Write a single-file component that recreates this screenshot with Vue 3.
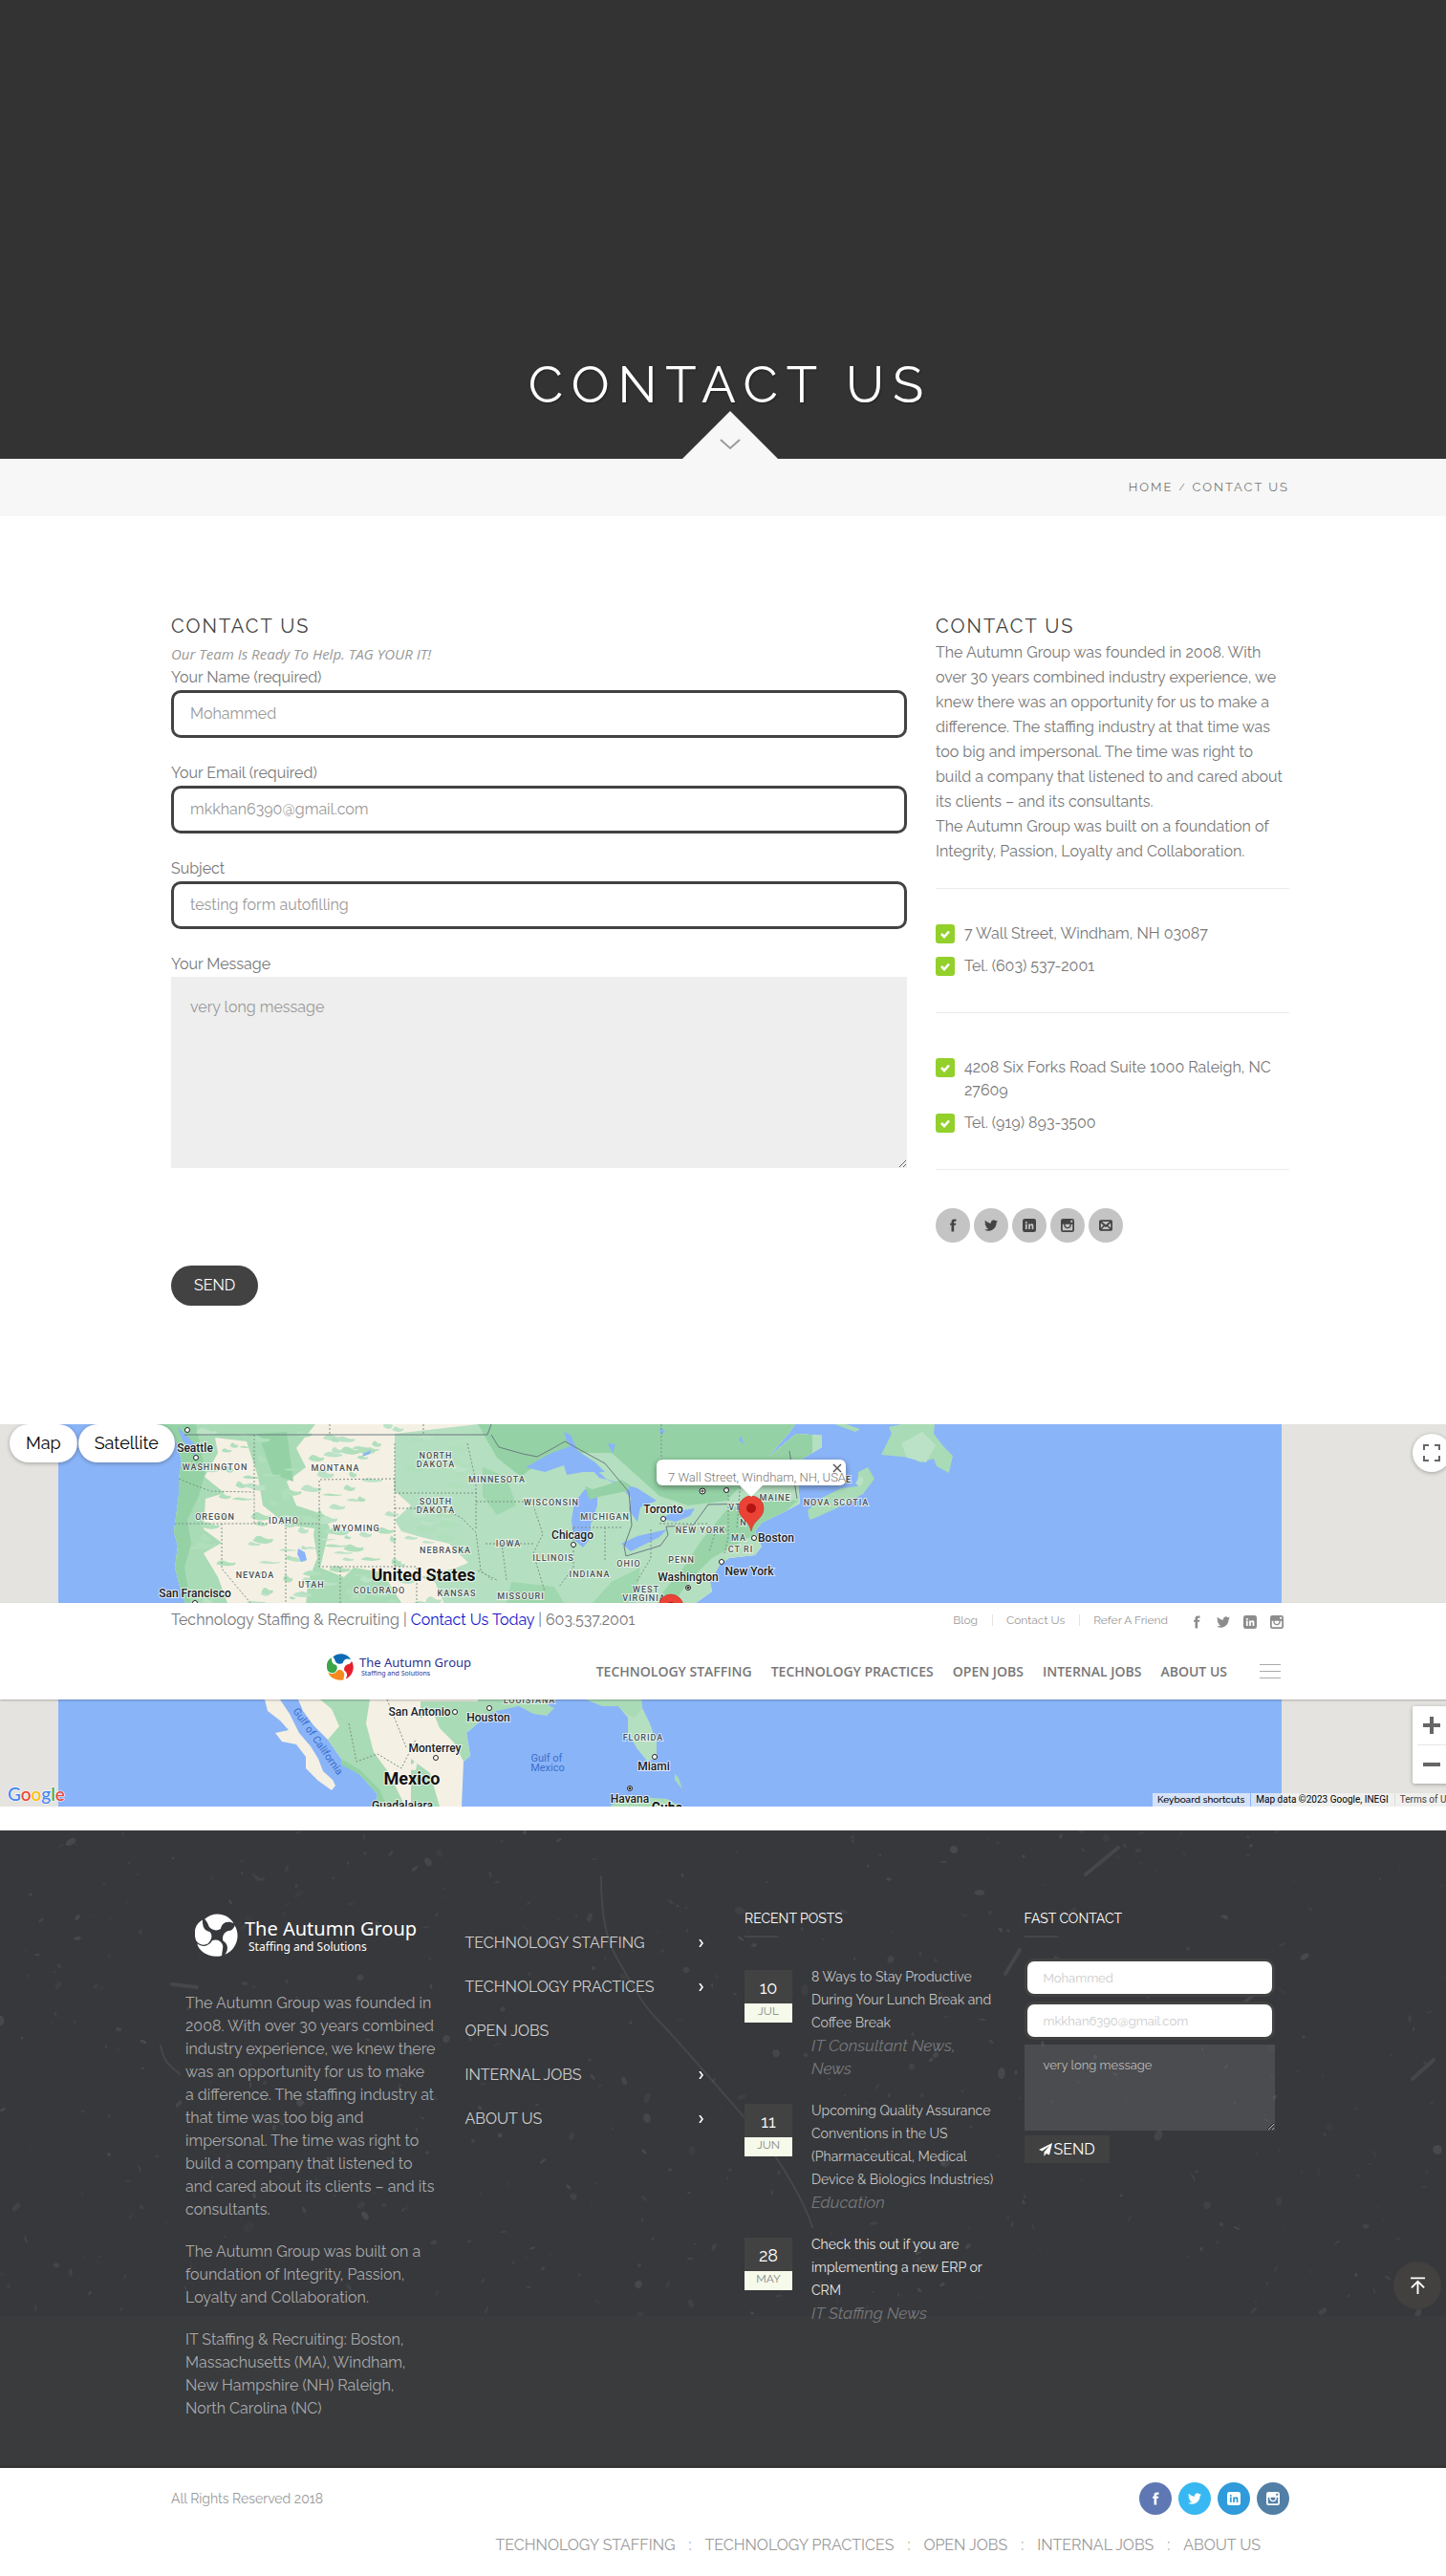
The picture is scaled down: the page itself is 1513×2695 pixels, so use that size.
<script setup>
import { ref } from 'vue'

const name = ref('Mohammed')
const email = ref('mkkhan6390@gmail.com')
const subject = ref('testing form autofilling')
const message = ref('very long message')

const links = ['TECHNOLOGY STAFFING', 'TECHNOLOGY PRACTICES', 'OPEN JOBS', 'INTERNAL JOBS', 'ABOUT US']

const icons = {
  facebook: 'M14 8V6c0-1 .4-1.500 1.600-1.500H18V1h-3.500C11 1 9.500 2.800 9.500 5.800V8H7v3.700h2.500V23H14V11.700h3.200L17.700 8z',
  twitter: 'M23.950 4.570a10 10 0 0 1-2.820.77 4.960 4.960 0 0 0 2.160-2.720c-.95.56-2 .96-3.130 1.180a4.920 4.920 0 0 0-8.380 4.480C7.690 8.100 4.070 6.130 1.640 3.160a4.820 4.820 0 0 0-.67 2.480c0 1.710.87 3.210 2.190 4.100a4.900 4.900 0 0 1-2.230-.62v.06a4.920 4.920 0 0 0 3.950 4.830 5 5 0 0 1-2.210.08 4.940 4.940 0 0 0 4.600 3.420A9.870 9.870 0 0 1 0 19.540a14 14 0 0 0 7.550 2.210c9.050 0 14-7.500 14-13.980 0-.21 0-.42-.02-.63a9.940 9.940 0 0 0 2.420-2.570z',
  linkedin: 'M4 0h16a4 4 0 0 1 4 4v16a4 4 0 0 1-4 4H4a4 4 0 0 1-4-4V4a4 4 0 0 1 4-4zM5 9.500v9.500h3V9.500zM5 5v3h3V5zM10.500 9.500v9.500h3v-5.500c0-2.200 3-2.200 3 0V19h3v-6.500c0-3.800-4.300-4.300-6-2v-1z',
  instagram: 'M4 0h16a4 4 0 0 1 4 4v16a4 4 0 0 1-4 4H4a4 4 0 0 1-4-4V4a4 4 0 0 1 4-4zM3 10v9.500A1.500 1.500 0 0 0 4.500 21h15a1.500 1.500 0 0 0 1.500-1.500V10h-2.600a6.500 6.500 0 1 1-12.800 0zM17.500 3v3.500H21V3zM8 10a4.200 4.200 0 1 0 8 0z',
  mail: 'M3 2h18a3 3 0 0 1 3 3v14a3 3 0 0 1-3 3H3a3 3 0 0 1-3-3V5a3 3 0 0 1 3-3zM3 7.500v9L8 12zM5 5l7 6.200L19 5zM21 7.500l-5 4.500 5 4.500zM9.700 13.500L5 19h14l-4.700-5.500-2.300 2z'
}
const sideSocial = ['facebook', 'twitter', 'linkedin', 'instagram', 'mail']
const social = ['facebook', 'twitter', 'linkedin', 'instagram']

const posts = [
  { day: '10', month: 'JUL', title: '8 Ways to Stay Productive During Your Lunch Break and Coffee Break', tag: 'IT Consultant News,\nNews' },
  { day: '11', month: 'JUN', title: 'Upcoming Quality Assurance Conventions in the US (Pharmaceutical, Medical Device & Biologics Industries)', tag: 'Education' },
  { day: '28', month: 'MAY', title: 'Check this out if you are implementing a new ERP or CRM', tag: 'IT Staffing News', bright: true }
]

const offices = [
  ['7 Wall Street, Windham, NH 03087', 'Tel. (603) 537-2001'],
  ['4208 Six Forks Road Suite 1000 Raleigh, NC 27609', 'Tel. (919) 893-3500']
]

// [text, centre x, baseline]
const states = [
  ['WASHINGTON', 225, 48], ['MONTANA', 351, 49], ['NORTH', 456, 36], ['DAKOTA', 456, 45], ['SOUTH', 456, 84],
  ['DAKOTA', 456, 93], ['OREGON', 225, 100], ['IDAHO', 297, 104], ['WYOMING', 373, 112], ['NEBRASKA', 466, 135],
  ['NEVADA', 267, 161], ['UTAH', 326, 171], ['COLORADO', 397, 177], ['KANSAS', 478, 180], ['MINNESOTA', 520, 61],
  ['WISCONSIN', 577, 85], ['MICHIGAN', 633, 100], ['IOWA', 532, 128], ['ILLINOIS', 579, 143], ['INDIANA', 617, 160],
  ['OHIO', 658, 149], ['PENN', 713, 145], ['NEW YORK', 733, 114], ['WEST', 676, 176], ['VIRGINIA', 674, 185],
  ['MISSOURI', 545, 183], ['MAINE', 811, 80], ['NOVA SCOTIA', 875, 85], ['VT', 769, 90], ['N', 778, 106],
  ['MA', 773, 122], ['CT RI', 775, 134], ['LOUISIANA', 554, 292], ['FLORIDA', 673, 331], ['E', 888, 61]
]
// [text, centre x, baseline, dot x, dot y, capital]
const cities = [
  ['Seattle', 204, 29, 205, 35], ['San Francisco', 204, 181, 204, 187], ['Chicago', 599, 120, 600, 126],
  ['Toronto', 694, 93, 694, 99], ['Boston', 812, 123, 789, 119], ['New York', 784, 158, 755, 144],
  ['Washington', 720, 164, 720, 171, true], ['San Antonio', 439, 305, 476, 301], ['Houston', 511, 311, 512, 297],
  ['Monterrey', 455, 343, 456, 349], ['Miami', 684, 362, 685, 348], ['Havana', 659, 396, 659, 381, true]
]

let seed = 41
const rand = () => {
  seed = (seed * 16807) % 2147483647
  return seed / 2147483647
}
const specks = Array.from({ length: 480 }, () => {
  const x = Math.round(rand() * 1528)
  const y = Math.round(rand() * 506)
  const big = rand() > 0.88
  return {
    x, y,
    rx: big ? 2 + rand() * 3 : 0.6 + rand() * 1.4,
    ry: big ? 2 + rand() * 4 : 1 + rand() * 3,
    a: Math.round(rand() * 180),
    o: 0.03 + rand() * 0.11
  }
})
const patches = Array.from({ length: 150 }, () => {
  const x = 200 + rand() * 300
  const y = rand() * 190
  const w = 3 + rand() * 8
  const h = 1 + rand() * 3
  return {
    d: `M${x - w} ${y}q${w * 0.4} ${-h * 2} ${w} ${-h}t${w} ${h * 0.4}q${w * 0.3} ${h} ${-w * 0.5} ${h * 1.3}t${-w * 1.5} ${-h * 0.7}z`,
    c: rand() > 0.5 ? '#bbe2c6' : '#b0dfbc'
  }
})
</script>

<template>
  <div class="page">
    <section class="hero">
      <h1>CONTACT US</h1>
      <a class="notch" href="#content" aria-label="Scroll down">
        <svg width="100" height="50" viewBox="0 0 100 50"><path d="M50 0L100 50H0z" fill="#f7f7f7" /><path d="M40 30l10 9 10-9" fill="none" stroke="#999" stroke-width="2" /></svg>
      </a>
    </section>
    <nav class="crumbs"><div class="wrap"><a href="#">HOME</a><span>/</span><a href="#">CONTACT US</a></div></nav>

    <main id="content" class="wrap main">
      <form class="contact" @submit.prevent>
        <h2>CONTACT US</h2>
        <p class="tagline">Our Team Is Ready To Help. TAG YOUR IT!</p>
        <label for="name">Your Name (required)</label>
        <input id="name" v-model="name" type="text">
        <label for="email">Your Email (required)</label>
        <input id="email" v-model="email" type="email">
        <label for="subject">Subject</label>
        <input id="subject" v-model="subject" type="text">
        <label for="message">Your Message</label>
        <textarea id="message" v-model="message"></textarea>
        <button type="submit">SEND</button>
      </form>
      <aside class="about">
        <h2>CONTACT US</h2>
        <p>The Autumn Group was founded in 2008. With<br>over 30 years combined industry experience, we<br>knew there was an opportunity for us to make a<br>difference. The staffing industry at that time was<br>too big and impersonal. The time was right to<br>build a company that listened to and cared about<br>its clients – and its consultants.</p>
        <p>The Autumn Group was built on a foundation of<br>Integrity, Passion, Loyalty and Collaboration.</p>
        <ul v-for="(office, i) in offices" :key="i" class="office">
          <li v-for="line in office" :key="line">
            <svg class="tick" viewBox="0 0 20 20"><rect width="20" height="20" rx="3" fill="#93d02b" /><path d="M6 10l3 3 5-5.500" fill="none" stroke="#fff" stroke-width="2.600" /></svg>
            <span>{{ line }}</span>
          </li>
        </ul>
        <div class="round-links">
          <a v-for="s in sideSocial" :key="s" href="#" :aria-label="s"><svg viewBox="0 0 24 24"><path :d="icons[s]" fill-rule="evenodd" /></svg></a>
        </div>
      </aside>
    </main>

    <section class="map">
      <svg class="map-art" viewBox="0 0 1528 400" preserveAspectRatio="xMinYMin slice">
        <defs>
          <clipPath id="land"><path d="M167 0L180 8 187 25 190 40 187 57 187 75 182 113 186 127 183 150 190 177 194 187 260 240 277 288H671L728 187 745 175 743 165 753 147 763 140 790 137 797 128 790 112 797 103 820 92 837 83 835 60 846 45 838 37 867 20 863 12 833 10 803 35 825 10 832 0z" /></clipPath>
        </defs>
        <rect width="1528" height="400" fill="#e5e3df" />
        <rect x="61" width="1280" height="400" fill="#8ab4f8" />
        <g clip-path="url(#land)">
          <rect x="160" width="700" height="290" fill="#f5f0e4" />
          <path d="M413 10L500 0H860V290H530L500 240 470 200 455 165 440 160 478 150 490 145 470 125 440 118 420 112 413 100 430 85 413 70z" fill="#b5dfc1" />
          <path d="M160 0H330L310 25 320 45 300 60 310 85 340 95 335 110 300 105 275 85 270 55 258 18 225 14 228 30 214 55 235 72 215 78 213 110 232 124 213 135 228 160 238 187H160z" fill="#a9dbb6" />
          <path d="M160 0H205L215 50 208 75 196 100 200 125 193 150 200 190 160 190zM270 10L300 8 307 60 285 52z" fill="#94d2a5" />
          <path d="M334 88L345 108 335 150 360 160 350 187 320 190 322 165 332 140 328 115zM370 150L400 155 420 187H350L352 168z" fill="#a9dbb6" />
          <path v-for="(p, i) in patches" :key="i" :d="p.d" :fill="p.c" />
          <path d="M500 0H850V60L800 40 760 80 720 85 690 75 640 30 577 30 545 55 520 35z" fill="#94d2a5" />
          <path d="M690 180L715 150 735 120 760 90 800 75 835 80 800 110 790 115 745 140 720 165 705 187z" fill="#99d4a9" />
          <path d="M505 45L530 55 540 85 520 95 505 75zM535 165L580 170 590 187 530 187zM640 165L670 150 665 187H620z" fill="#9fd7ae" />
        </g>
        <path d="M550 45l27-15 20-7 26 17 10 10-23 0-17 3-3-10-20 7zM601 82l11-14 13 2 0 15-7 20-1 15-7 9-10-9-2-20zM633 57l34 10 20 13-17 7-3 15-9-12 2-13-13-14zM650 125l17-8 31-7-8 8-30 15zM693 99l10-7 24-4-5 8-15 6z" fill="#8ab4f8" />
        <path d="M590 8l7 3 9 20 24 22 5 5-8-2-20-22-14-16zM636 20l8 1-3 10zM690 3l6 4-4 5zM775 12l4 9-6-4zM186 3l8 8 8 8 2 14-6-6-8-12zM312 130l7 4 2 8-6 2-4-8zM380 31l8-4-1 4-8 3z" fill="#8ab4f8" />
        <path d="M612 65l8 3 14-4 16-6 10 6-4 6-30 6-9 3z" fill="#94d2a5" />
        <path d="M922 32l11-22-3-7L943 0h35l-1 10 10 13 10 10-4 18-13-7-3-8-14 4-10-5zM847 100l-2-10 15-13 20-10 17-2 1-15 10-5 7 12-12 16-26 14-24 11zM873 0l12 0 15 5-5 3z" fill="#a9dbb6" />
        <path d="M943 20l22-12 14 14-10 18-20-5zM895 62l5-8 4 4-3 7z" fill="#bbe2c6" />
        <path d="M312 288H500L502 311 488 323 492 347 485 353 483 400H393L395 387 377 367 357 350 343 330 328 315 317 300z" fill="#f5f0e4" />
        <path d="M335 288h52l-4 25 8 30 16 22 17 35h-31l2-13-18-20-20-17-14-20 12-14-8-18zM440 290h60l2 21-14 12 4 24-7 6-10-20-15-15-8-20-12 10zM430 350l20 15 10 35h-30z" fill="#a9dbb6" />
        <path d="M357 350l20 12 20 20 8 18h-12l2-13-18-20-20-11z" fill="#94d2a5" />
        <path d="M277 288l3 12 13 10 9 10-14 3 7 9 15 3 10 13v12l13 13 14 10 4-5-3-6-10-9-5-13-8-13-12-14-10-20-10-15zM421 352l10 4 7-8-3 14-12-1z" fill="#f5f0e4" />
        <path d="M500 288v20l20-8 23-5 15 8 14 2 8-8-8-4 11-5z" fill="#a9dbb6" />
        <path d="M613 288h58l1 9 8 16 7 20v17l-10 2-10-12-10-17v-16l-10-12-17-12z" fill="#b5dfc1" />
        <path d="M613 288h58l1 9-8 10-7-3-10-9-17 0z" fill="#a9dbb6" />
        <path d="M638 400l10-8 20-2 30 2 14 8zM706 366l4 4 4 12-8-10z" fill="#a9dbb6" />
        <path d="M193 11H510L514 0M514 11l8 13 25 7 15 3 15-8 14-8 42 23 25 30 3 35-8 22 2 10 36-11 8-11-2-9 28-1 16-22 50-1M826 28l8 50" fill="none" stroke="#6b7b80" />
        <path d="M187 57l12 5 21 8 46 1v33l-83 0M266 11v60M266 104v0h68v45h79v-92l-79 1v46M232 104v47l30 36M299 104v83M413 20v52h86M413 88h50l20 10 15 15 5 40 12 10M356 149v38M413 149l23 0v38M345 0v11M443 0v11M489 20l9 40v50M498 81h60M508 125h50M525 125l5 38M500 153l20 10M558 85l10 30-10 20 12 40M600 108h50M600 108v42l-15 20M633 108v35M681 110v30l-15 25M690 104h50l8 10-6 20M762 58v60l-4 17M775 58l-4 50M692 0v38M405 288l20 50M365 313l8 40 22-8 25 15 15-30" fill="none" stroke="#7c8f88" stroke-dasharray="2 2" />
        <g class="state"><text v-for="(s, i) in states" :key="i" :x="s[1]" :y="s[2]">{{ s[0] }}</text></g>
        <g class="city"><text v-for="c in cities" :key="c[0]" :x="c[1]" :y="c[2]">{{ c[0] }}</text></g>
        <g v-for="c in cities" :key="c[0]" fill="#fff" stroke="#222">
          <circle :cx="c[3]" :cy="c[4]" r="2.500" /><circle v-if="c[5]" :cx="c[3]" :cy="c[4]" r="1" fill="#222" />
        </g>
        <g fill="#fff" stroke="#222"><circle cx="735" cy="70" r="3" /><circle cx="735" cy="70" r="1" /><circle cx="760" cy="69" r="2.500" /><circle cx="196" cy="6" r="2.500" /></g>
        <g class="country"><text x="443" y="164">United States</text><text x="431" y="377">Mexico</text><text x="698" y="406" class="small">Cuba</text></g>
        <g class="city"><text x="421" y="403">Guadalajara</text></g>
        <g class="water"><text x="572" y="353">Gulf of</text><text x="573" y="363">Mexico</text><text transform="translate(306 300) rotate(55)" text-anchor="start">Gulf of California</text></g>
        <g v-for="pin in [[786, 112], [702, 215]]" :key="pin[0]">
          <path :d="`M${pin[0]} ${pin[1]}c-2-12-13-13-13-24a13 13 0 0 1 26 0c0 11-11 12-13 24z`" fill="#ea4335" stroke="#c5221f" stroke-width="0.500" />
          <circle :cx="pin[0]" :cy="pin[1] - 24" r="5" fill="#b31412" />
        </g>
      </svg>
      <div class="bubble"><span>7 Wall Street, Windham, NH, USA</span><button type="button" aria-label="Close"><svg viewBox="0 0 10 10"><path d="M1 1l8 8M9 1L1 9" stroke="#555" stroke-width="1.500" /></svg></button></div>
      <div class="map-type"><button type="button">Map</button><button type="button">Satellite</button></div>
      <button class="full" type="button" aria-label="Toggle fullscreen"><svg viewBox="0 0 18 18"><path d="M1 6V1h5M12 1h5v5M17 12v5h-5M6 17H1v-5" fill="none" stroke="#666" stroke-width="2" /></svg></button>
      <div class="zoom">
        <button type="button" aria-label="Zoom in"><svg viewBox="0 0 18 18"><path d="M0 9h18M9 0v18" stroke="#666" stroke-width="4" /></svg></button>
        <button type="button" aria-label="Zoom out"><svg viewBox="0 0 18 18"><path d="M0 9h18" stroke="#666" stroke-width="4" /></svg></button>
      </div>
      <a class="google" href="#" aria-label="Google"><span>G</span><span>o</span><span>o</span><span>g</span><span>l</span><span>e</span></a>
      <div class="legal"><button type="button">Keyboard shortcuts</button><span>Map data ©2023 Google, INEGI</span><a href="#">Terms of Use</a></div>

      <header class="header">
        <div class="wrap topbar">
          <p>Technology Staffing &amp; Recruiting | <a href="#">Contact Us Today</a> | 603.537.2001</p>
          <div class="mini"><a href="#">Blog</a><a href="#">Contact Us</a><a href="#">Refer A Friend</a></div>
          <div class="mini-social"><a v-for="s in social" :key="s" href="#" :aria-label="s"><svg viewBox="0 0 24 24"><path :d="icons[s]" fill-rule="evenodd" /></svg></a></div>
        </div>
        <div class="wrap navbar">
          <a class="logo" href="#">
            <svg viewBox="0 0 40 40">
              <path d="M9 5C18-3 31 0 36 9c-7-3-11 0-12 5-4 3-9 1-11-2-1-3-2-5-4-7z" fill="#0e6bb3" />
              <path d="M37 11c6 10 1 23-9 27 4-6 2-10-2-13-1-5 2-8 5-9 3 0 5-2 6-5z" fill="#e5202b" />
              <path d="M25 39C15 42 4 36 2 28c6 4 11 2 14-3 5-2 9 1 10 5 0 4-1 6-1 9z" fill="#f68a1f" />
              <path d="M1 25C-2 16 1 9 7 6c0 7 2 10 7 11 3 4 1 8-2 11-4 2-8 1-11-3z" fill="#3aa648" />
            </svg>
            <span><b>The Autumn Group</b><i>Staffing and Solutions</i></span>
          </a>
          <nav><a v-for="l in links" :key="l" href="#">{{ l }}</a></nav>
          <button class="burger" type="button" aria-label="Menu"><span></span><span></span><span></span></button>
        </div>
      </header>
    </section>

    <footer class="footer">
      <svg class="dust" viewBox="0 0 1528 508" preserveAspectRatio="xMidYMin slice">
        <rect width="1528" height="508" fill="#37383b" />
        <ellipse v-for="(s, i) in specks" :key="i" :rx="s.rx" :ry="s.ry" :transform="`translate(${s.x} ${s.y}) rotate(${s.a})`" fill="#b4b6bc" :opacity="s.o" />
        <g fill="none" stroke="#b4b6bc" stroke-opacity=".12" stroke-linecap="round">
          <path d="M629 48C629 90 634 115 648 138S670 180 688 198 735 250 770 290 815 345 828 368 845 400 850 415M168 225c4 20 10 20 20 30" stroke-width="2" />
          <path d="M1136 46l34-28M1478 260l22-20M1052 150l15-25M180 161l26 3M1290 190l24-20" stroke-width="4" />
        </g>
      </svg>
      <div class="wrap cols">
        <div class="col">
          <a class="logo light" href="#">
            <svg viewBox="0 0 40 40" fill="#fff">
              <path d="M9 5C18-3 31 0 36 9c-7-3-11 0-12 5-4 3-9 1-11-2-1-3-2-5-4-7z" />
              <path d="M37 11c6 10 1 23-9 27 4-6 2-10-2-13-1-5 2-8 5-9 3 0 5-2 6-5z" />
              <path d="M25 39C15 42 4 36 2 28c6 4 11 2 14-3 5-2 9 1 10 5 0 4-1 6-1 9z" />
              <path d="M1 25C-2 16 1 9 7 6c0 7 2 10 7 11 3 4 1 8-2 11-4 2-8 1-11-3z" />
            </svg>
            <span><b>The Autumn Group</b><i>Staffing and Solutions</i></span>
          </a>
          <p>The Autumn Group was founded in<br>2008. With over 30 years combined<br>industry experience, we knew there<br>was an opportunity for us to make<br>a difference. The staffing industry at<br>that time was too big and<br>impersonal. The time was right to<br>build a company that listened to<br>and cared about its clients – and its<br>consultants.</p>
          <p>The Autumn Group was built on a<br>foundation of Integrity, Passion,<br>Loyalty and Collaboration.</p>
          <p>IT Staffing &amp; Recruiting: Boston,<br>Massachusetts (MA), Windham,<br>New Hampshire (NH) Raleigh,<br>North Carolina (NC)</p>
        </div>
        <ul class="col menu">
          <li v-for="l in links" :key="l"><a href="#">{{ l }}</a><svg v-if="l !== 'OPEN JOBS'" viewBox="0 0 6 8"><path d="M1 0l3 4-3 4" fill="none" stroke="#fff" stroke-width="1.600" /></svg></li>
        </ul>
        <div class="col">
          <h3>RECENT POSTS</h3>
          <article v-for="p in posts" :key="p.day">
            <time><b>{{ p.day }}</b><span>{{ p.month }}</span></time>
            <div><a href="#" :class="{ bright: p.bright }">{{ p.title }}</a><em>{{ p.tag }}</em></div>
          </article>
        </div>
        <div class="col">
          <h3>FAST CONTACT</h3>
          <form class="fast" @submit.prevent>
            <input v-model="name" type="text" aria-label="Name">
            <input v-model="email" type="email" aria-label="Email">
            <textarea v-model="message" aria-label="Message"></textarea>
            <button type="submit"><svg viewBox="0 0 14 14"><path d="M14 0L0 7l3.500 1.500L11 3 5.500 9.500V14l2.200-3L11 12.500z" fill="#fff" /></svg>SEND</button>
          </form>
        </div>
      </div>
      <a class="to-top" href="#" aria-label="Back to top"><svg viewBox="0 0 18 20"><path d="M1 1.500h16M9 19V5M2 12l7-7 7 7" fill="none" stroke="#fff" stroke-width="2" /></svg></a>
    </footer>

    <section class="wrap bottom">
      <div class="bottom-row">
        <p>All Rights Reserved 2018</p>
        <div class="brand-links"><a v-for="s in social" :key="s" :class="s" href="#" :aria-label="s"><svg viewBox="0 0 24 24"><path :d="icons[s]" fill-rule="evenodd" /></svg></a></div>
      </div>
      <nav><template v-for="(l, i) in links" :key="l"><span v-if="i">:</span><a href="#">{{ l }}</a></template></nav>
    </section>
  </div>
</template>

<style>
html { overflow-x: hidden; }
body { background: #fff; overflow-x: hidden; }
</style>

<style scoped>
* { box-sizing: border-box; }
.page { width: calc(100% + 15px); font: 16px/26px Raleway, Lato, sans-serif; color: #777; }
h1, h2, h3, p, ul { margin: 0; padding: 0; font-weight: 400; }
ul { list-style: none; }
a { color: inherit; text-decoration: none; }
button { border: 0; padding: 0; font: inherit; cursor: pointer; }
svg { display: block; }
.wrap { width: 100%; max-width: 1170px; margin: 0 auto; }

.hero { height: 480px; background: #333; display: flex; flex-direction: column; align-items: center; justify-content: flex-end; }
h1 { font-size: 53px; line-height: 56px; letter-spacing: 9px; color: #fff; text-shadow: 1px 1px 2px #222; }
.crumbs { background: #f7f7f7; height: 60px; }
.crumbs .wrap { display: flex; justify-content: flex-end; gap: 6px; line-height: 59px; font-size: 13px; letter-spacing: 2px; }
.crumbs span { font-size: 10px; }

.main { display: grid; grid-template-columns: 770px 1fr; gap: 30px; padding: 101px 0 124px; }
h2 { font-size: 20px; line-height: 28px; letter-spacing: 2px; color: #444; padding-bottom: 2px; }
.about h2 { padding-bottom: 1px; }
.contact { display: flex; flex-direction: column; align-items: flex-start; }
.tagline { font: italic 15px/26px "Open Sans", sans-serif; color: #999; }
.contact label { line-height: 26px; margin-top: -1px; }
.contact input { width: 100%; height: 50px; margin-bottom: 25px; border: 3px solid #424242; border-radius: 10px; padding: 0 17px 1px; font: inherit; color: #999; background: #fff; }
.contact textarea { width: 100%; height: 200px; display: block; border: 0; padding: 19px 20px; background: #eee; font: inherit; color: #999; }
.contact button { margin-top: 102px; height: 42px; padding: 0 24px; border-radius: 21px; background: #424242; color: #fff; }

.office { border-top: 1px solid #ebebeb; margin-top: 25px; padding: 35px 0 1px; }
.office + .office { padding-top: 45px; }
.office li { display: flex; gap: 10px; line-height: 24px; margin-bottom: 10px; }
.tick { width: 20px; height: 20px; margin-top: 2px; flex: none; }
.round-links { border-top: 1px solid #ebebeb; margin-top: 25px; padding-top: 40px; display: flex; gap: 4px; }
.round-links a { width: 36px; height: 36px; border-radius: 50%; background: #c4c4c4; display: grid; place-items: center; }
.round-links svg { width: 14px; fill: #444; }

.map { position: relative; height: 400px; overflow: hidden; margin-bottom: 25px; }
.map-art { width: 100%; height: 400px; font-family: Roboto, sans-serif; text-anchor: middle; }
.state { font-size: 9px; font-weight: 500; letter-spacing: 1px; fill: #4b5357; }
.city { font-size: 12px; font-weight: 500; fill: #202124; }
.country { font-size: 18px; font-weight: 700; fill: #111; }
.country .small { font-size: 14px; }
.state, .city, .country { paint-order: stroke; stroke: #fff; stroke-opacity: .7; stroke-width: 2px; }
.water { font-size: 11px; fill: #3a6fcc; }
.bubble { position: absolute; left: 687px; top: 37px; width: 198px; height: 27px; background: #fff; border-radius: 6px; box-shadow: 0 2px 6px rgba(0, 0, 0, .4); font: 300 13px/38px Roboto, sans-serif; padding-left: 12px; white-space: nowrap; color: #777; }
.bubble::after { content: ""; position: absolute; left: 87px; top: 27px; border: 12px solid transparent; border-top-color: #fff; border-bottom: 0; }
.bubble button { position: absolute; right: 4px; top: 4px; width: 10px; background: none; }
.map-type { position: absolute; left: 10px; top: 0; display: flex; gap: 1px; }
.map-type button { height: 40px; border-radius: 20px; padding: 0 17px; background: #fff; color: #000; font-size: 18px; box-shadow: 0 1px 4px rgba(0, 0, 0, .3); }
.full { position: absolute; right: 10px; top: 10px; width: 40px; height: 40px; border-radius: 50%; background: #fff; display: grid; place-items: center; box-shadow: 0 1px 4px rgba(0, 0, 0, .3); }
.full svg, .zoom svg { width: 18px; }
.zoom { position: absolute; right: 10px; top: 295px; width: 40px; background: #fff; border-radius: 2px; box-shadow: 0 1px 4px rgba(0, 0, 0, .3); padding: 0 5px; }
.zoom button { width: 30px; height: 40px; background: none; display: grid; place-items: center; }
.zoom button + button { border-top: 1px solid #e6e6e6; height: 41px; }
.google { position: absolute; left: 8px; bottom: 0; font: 500 19px/26px Lato, sans-serif; color: #4285f4; -webkit-text-stroke: 1px #fff; paint-order: stroke; }
.google span:nth-child(2), .google span:nth-child(6) { color: #ea4335; }
.google span:nth-child(3) { color: #fbbc05; }
.google span:nth-child(5) { color: #34a853; }
.legal { position: absolute; left: 1206px; right: 0; bottom: 0; height: 14px; display: flex; background: rgba(245, 245, 245, .7); font: 10px/14px Roboto, sans-serif; color: #000; white-space: nowrap; }
.legal > * { padding: 0 6px 0 5px; }
.legal button { background: none; font: 500 10px/14px Raleway, Lato, sans-serif; border-right: 1px solid #8ab4f8; }
.legal a { color: #444; border-left: 1px solid #ddd; }

.header { position: absolute; left: 0; right: 0; top: 187px; height: 101px; background: #fff; box-shadow: 0 1px 2px rgba(0, 0, 0, .25); }
.topbar { display: flex; align-items: center; height: 36px; padding-right: 6px; }
.topbar p { flex: 1; }
.topbar p a { color: #1515cc; }
.mini { display: flex; font-size: 12px; color: #999; }
.mini a { padding-right: 15px; margin-right: 14px; line-height: 12px; border-right: 1px solid #e4e4e4; }
.mini a:last-child { border: 0; margin-right: 8px; }
.mini-social { display: flex; gap: 14px; padding-top: 4px; }
.mini-social svg { width: 14px; fill: #8c8c8c; }
.navbar { display: flex; align-items: center; height: 65px; padding: 0 9px 0 163px; }
.logo { display: flex; align-items: center; gap: 6px; color: #2e3192; font-family: "Noto Sans", sans-serif; }
.logo svg { width: 28px; }
.logo b { display: block; font-size: 13px; line-height: 14px; font-weight: 400; }
.logo i { display: block; font-size: 7px; line-height: 9px; font-style: normal; padding-left: 2px; }
.navbar .logo { margin-bottom: 4px; }
.navbar nav { display: flex; gap: 20px; flex: 1; justify-content: flex-end; font: 600 14px/20px "Open Sans", sans-serif; margin-top: 6px; }
.burger { width: 22px; margin: 6px 0 0 34px; background: none; display: grid; gap: 6px; }
.burger span { height: 1px; background: #aaa; }

.footer { position: relative; background: #3a3b3c; border-bottom: 3px solid #363637; }
.dust { position: absolute; left: 0; top: 0; width: 100%; height: 508px; }
.cols { position: relative; display: grid; grid-template-columns: repeat(4, 1fr); padding: 80px 0 27px; }
.col { padding: 0 15px; line-height: 24px; color: #a9aaac; white-space: nowrap; }
.col p { margin-bottom: 20px; }
.logo.light { color: #fff; padding: 7px 0 0 10px; margin-bottom: 37px; gap: 7px; }
.logo.light svg { width: 45px; }
.logo.light b { font-size: 20px; line-height: 24px; }
.logo.light i { font-size: 12px; line-height: 14px; padding-left: 4px; }
.menu { padding-top: 26px; color: #d0d0d1; }
.menu li { display: flex; align-items: center; justify-content: space-between; margin-bottom: 22px; padding-right: 12px; }
.menu svg { width: 6px; }
h3 { font-size: 14px; line-height: 24px; color: #fff; }
h3::after { content: ""; display: block; width: 35px; height: 2px; margin-top: 6px; background: #46474a; }
article { display: flex; gap: 20px; margin-bottom: 20px; white-space: normal; }
h3 + article { margin-top: 29px; }
time { width: 50px; margin-top: 5px; text-align: center; flex: none; }
time b { display: block; height: 35px; line-height: 38px; background: #424242; color: #fff; font-weight: 400; font-size: 18px; }
time span { display: block; height: 20px; line-height: 16px; background: #f5faea; color: #888; font-size: 12px; }
article a { display: block; font-size: 14px; color: #c4c5c6; }
article a.bright { color: #e6e6e6; }
article em { display: block; font-size: 17px; color: #77787b; white-space: pre-line; }
.fast { margin-top: 22px; display: flex; flex-direction: column; align-items: flex-start; gap: 5px; }
.fast input { width: 100%; height: 40px; border: 3px solid #424242; border-radius: 10px; padding: 0 17px; background: #fff; color: #ccc; font: inherit; font-size: 13px; }
.fast textarea { width: 100%; height: 90px; display: block; border: 0; padding: 10px 20px; background: rgba(255, 255, 255, .1); color: #bbb; font: inherit; font-size: 13px; }
.fast button { display: flex; align-items: center; gap: 2px; height: 29px; padding: 0 15px; background: #414141; color: #fff; }
.fast button svg { width: 14px; }
.to-top { position: absolute; right: 20px; top: 451px; width: 50px; height: 50px; border-radius: 50%; background: #42413f; display: grid; place-items: center; }
.to-top svg { width: 17px; }

.bottom { padding: 15px 0 13px; color: #999; }
.bottom-row { display: flex; justify-content: space-between; align-items: center; font-size: 14px; }
.brand-links { display: flex; gap: 7px; }
.brand-links a { width: 34px; height: 34px; border-radius: 50%; display: grid; place-items: center; }
.brand-links svg { width: 14px; fill: #fff; }
.facebook { background: #5f78b3; }
.twitter { background: #38b8f2; }
.linkedin { background: #2f9bda; }
.instagram { background: #527fa6; }
.bottom nav { display: flex; justify-content: flex-end; gap: 14px; padding-right: 30px; margin-top: 19px; }
</style>
